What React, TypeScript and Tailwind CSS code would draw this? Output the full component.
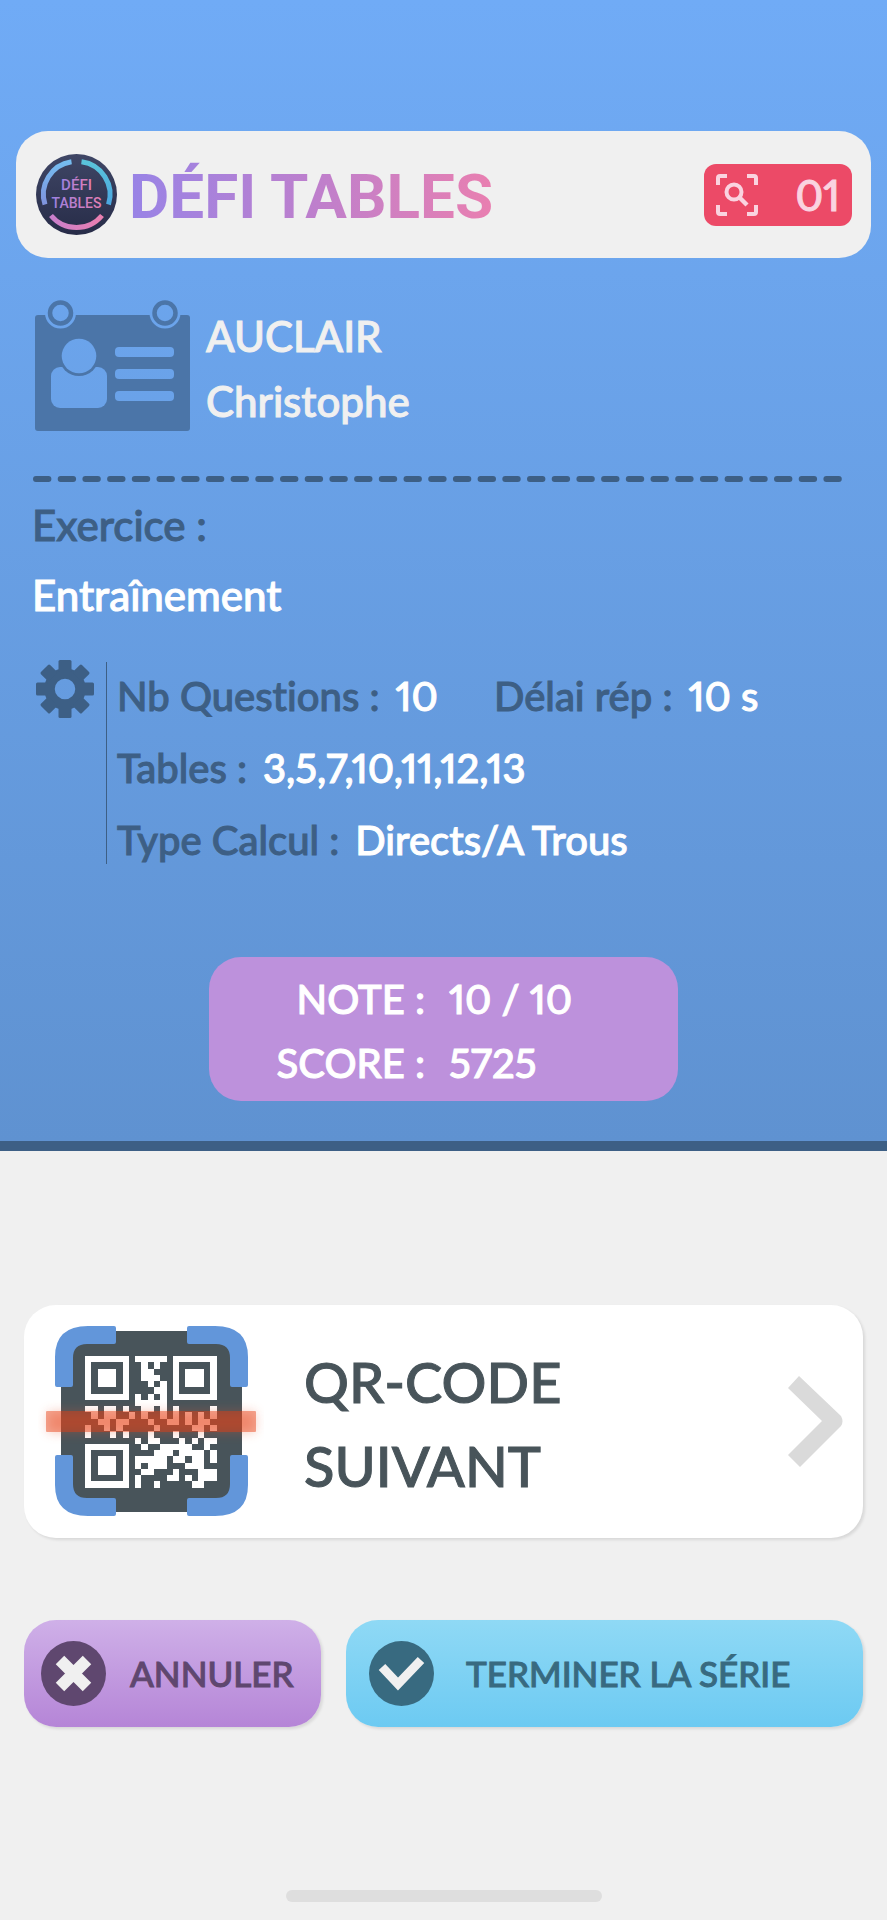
import type { ReactNode } from "react";

const QR_ROWS = [
  "111111101111101111111",
  "100000100101001000001",
  "101110100110001011101",
  "101110100111001011101",
  "101110100010101011101",
  "100000100001101000001",
  "111111101010101111111",
  "000000001111100000000",
  "110110100110101000001",
  "010110010100101010101",
  "001101100010011010110",
  "100101000001000001101",
  "100010100010001000100",
  "000000001011000101011",
  "111111100100111110010",
  "100000100001110111101",
  "101110101111101101101",
  "101110101011100011100",
  "101110100110001000111",
  "100000101000011010111",
  "111111101001000001100",
];

/* -----------------------------
   ICONS
------------------------------*/
function Logo() {
  return (
    <svg viewBox="0 0 81 81" className="w-[81px] h-[81px] shrink-0" role="img" aria-label="Défi Tables">
      <defs>
        <linearGradient id="logoBg" x1="0" y1="0" x2="0" y2="1">
          <stop offset="0" stopColor="#3f4665" />
          <stop offset="1" stopColor="#272c48" />
        </linearGradient>
        <linearGradient id="arcLeft" x1="0" y1="0" x2="0" y2="1">
          <stop offset="0" stopColor="#75bdf0" />
          <stop offset="1" stopColor="#7f92dc" />
        </linearGradient>
        <linearGradient id="arcRight" x1="0" y1="0" x2="0" y2="1">
          <stop offset="0" stopColor="#5ac4da" />
          <stop offset="1" stopColor="#4ba6e0" />
        </linearGradient>
        <linearGradient id="textPink" x1="0" y1="0" x2="1" y2="0">
          <stop offset="0" stopColor="#9b82e2" />
          <stop offset="0.5" stopColor="#c07ecb" />
          <stop offset="1" stopColor="#e57fb2" />
        </linearGradient>
        <linearGradient id="arcPink" x1="0" y1="0" x2="1" y2="0">
          <stop offset="0" stopColor="#c97fcb" />
          <stop offset="1" stopColor="#ea7fb0" />
        </linearGradient>
      </defs>
      <circle cx="40.500" cy="40.500" r="40.500" fill="url(#logoBg)" />
      <g fill="none" strokeWidth="5">
        <path d="M35.500 7.800A33 33 0 0 0 9 50.500" stroke="url(#arcLeft)" />
        <path d="M45.500 7.800A33 33 0 0 1 72.500 50.500" stroke="url(#arcRight)" />
        <path d="M15 61.500A33 33 0 0 0 66 61.500" stroke="url(#arcPink)" />
      </g>
      <g fill="url(#textPink)" fontFamily="Roboto, sans-serif" fontWeight="500" textAnchor="middle" className="[-webkit-text-stroke:0px]">
        <text x="40.500" y="36" fontSize="15">DÉFI</text>
        <text x="40.500" y="54" fontSize="14">TABLES</text>
      </g>
    </svg>
  );
}

function ScanIcon() {
  return (
    <svg viewBox="0 0 42 42" className="w-[42px] h-[42px]" fill="none" stroke="#fad3e0" strokeWidth="4" aria-hidden="true">
      <path d="M2 11V4Q2 2 4 2H11M31 2H38Q40 2 40 4V11M40 31V38Q40 40 38 40H31M11 40H4Q2 40 2 38V31" />
      <circle cx="18" cy="18" r="7.500" />
      <path d="M23 23L31 31" strokeWidth="4.500" />
    </svg>
  );
}

function BadgeCardIcon() {
  return (
    <svg viewBox="0 0 155 131" className="w-[155px] h-[131px] shrink-0" aria-hidden="true">
      <defs>
        <mask id="cardHoles">
          <rect width="155" height="131" fill="#fff" />
          <g fill="#000">
            <circle cx="25.500" cy="13" r="15.500" />
            <circle cx="130" cy="13" r="15.500" />
            <rect x="16" y="67" width="56" height="41" rx="9" />
            <rect x="80" y="47" width="59" height="10" rx="4" />
            <rect x="80" y="69" width="59" height="10" rx="4" />
            <rect x="80" y="91" width="59" height="10" rx="4" />
          </g>
          <circle cx="44" cy="56" r="20" fill="#fff" />
          <circle cx="44" cy="56" r="17.300" fill="#000" />
        </mask>
      </defs>
      <rect y="15" width="155" height="116" rx="3" fill="#4b75a8" mask="url(#cardHoles)" />
      <g fill="none" stroke="#4b75a8" strokeWidth="4.500">
        <circle cx="25.500" cy="13" r="10.500" />
        <circle cx="130" cy="13" r="10.500" />
      </g>
    </svg>
  );
}

function GearIcon() {
  return (
    <svg viewBox="-29 -29 58 58" className="w-[58px] h-[58px] shrink-0" fill="#3d5f85" aria-hidden="true">
      <circle r="15.500" fill="none" stroke="#3d5f85" strokeWidth="10.500" />
      {[0, 45, 90, 135, 180, 225, 270, 315].map((a) => (
        <rect key={a} x="-6.500" y="-29" width="13" height="12" rx="1.500" transform={`rotate(${a})`} />
      ))}
    </svg>
  );
}

function QrIcon() {
  return (
    <svg viewBox="0 0 226 210" className="w-[226px] h-[210px] shrink-0" aria-hidden="true">
      <defs>
        <filter id="glow" x="-20%" y="-80%" width="140%" height="260%">
          <feGaussianBlur stdDeviation="6" />
        </filter>
      </defs>
      <rect x="23" y="14" width="181" height="181" rx="20" fill="#48545a" />
      <g transform="translate(47 39) scale(6.270)" fill="#fff" shapeRendering="crispEdges">
        {QR_ROWS.map((row, y) =>
          row.split("").map((c, x) => (c === "1" ? <rect key={`${x}-${y}`} x={x} y={y} width="1" height="1" /> : null))
        )}
      </g>
      <g fill="#6296da">
        <path d="M17 68V40Q17 9 50 9H76Q78 9 78 11V25Q78 27 76 27H49Q35 27 35 41V68Q35 70 33 70H19Q17 70 17 68Z" />
        <path d="M210 68V40Q210 9 177 9H151Q149 9 149 11V25Q149 27 151 27H178Q192 27 192 41V68Q192 70 194 70H208Q210 70 210 68Z" />
        <path d="M17 140V168Q17 199 50 199H76Q78 199 78 197V183Q78 181 76 181H49Q35 181 35 167V140Q35 138 33 138H19Q17 138 17 140Z" />
        <path d="M210 140V168Q210 199 177 199H151Q149 199 149 197V183Q149 181 151 181H178Q192 181 192 167V140Q192 138 194 138H208Q210 138 210 140Z" />
      </g>
      <rect x="10" y="95" width="207" height="20" fill="#e8552f" opacity="0.350" filter="url(#glow)" />
      <rect x="8" y="94" width="210" height="21" rx="1" fill="#e63c10" opacity="0.450" />
    </svg>
  );
}

function Param({ label, children }: { label: string; children: ReactNode }) {
  return (
    <div className="flex gap-4 whitespace-nowrap">
      <dt className="text-[#3d5f85]">{label}</dt>
      <dd className="text-white">{children}</dd>
    </div>
  );
}

/* -----------------------------
   MAIN SCREEN
------------------------------*/
export default function App() {
  return (
    <main className="min-h-screen flex flex-col bg-[#f0f0f0] font-['Lato',sans-serif] font-medium text-[42px] proportional-nums [font-variant-ligatures:none] [-webkit-text-stroke:1px_currentColor]">
      {/* SUMMARY */}
      <section className="bg-linear-to-b from-[#70abf6] to-[#5f92d1] border-b-10 border-[#3d5f85] pt-[131px] pb-10">
        <header className="mx-4 h-[127px] pl-5 pr-[19px] flex items-center bg-[#f0f0f0] rounded-4xl">
          <Logo />
          <h1 className="ml-3 pt-1 font-['Roboto',sans-serif] font-bold text-[62px] leading-[72px] bg-linear-to-r from-[#9883e6] via-[#bd7fcd] to-[#e97fb0] bg-clip-text text-transparent [-webkit-text-stroke:0px]">
            DÉFI TABLES
          </h1>
          <div className="ml-auto w-[148px] h-[62px] px-3 flex items-center justify-between bg-[#ec4a67] text-[#fad3e0] rounded-xl">
            <ScanIcon />
            <span className="leading-[62px]">01</span>
          </div>
        </header>

        <div className="mt-[42px] ml-[35px] flex gap-4 leading-[65px] text-[#f0f0f0]">
          <BadgeCardIcon />
          <div className="pt-1">
            <p>AUCLAIR</p>
            <p>Christophe</p>
          </div>
        </div>

        <svg className="mt-[42px] ml-[33px] w-[810px] h-[6px]" aria-hidden="true">
          <line x1="3" y1="3" x2="807" y2="3" stroke="#3d5f85" strokeWidth="6" strokeLinecap="round" strokeDasharray="12.400 12.300" />
        </svg>

        <div className="mt-2 ml-8 leading-[70px]">
          <p className="text-[#3d5f85]">Exercice :</p>
          <p className="text-white">Entraînement</p>
        </div>

        <div className="mt-[30px] ml-9 flex text-[40px] leading-[72px]">
          <GearIcon />
          <div className="ml-3 mt-0.5 mb-3 w-px bg-[#3d5f85]" />
          <dl className="ml-2.5 grow">
            <div className="grid grid-cols-[377px_1fr]">
              <Param label="Nb Questions :">10</Param>
              <Param label="Délai rép :">10 s</Param>
            </div>
            <Param label="Tables :">3,5,7,10,11,12,13</Param>
            <Param label="Type Calcul :">Directs/A Trous</Param>
          </dl>
        </div>

        <dl className="mt-[81px] mx-auto w-[469px] pt-2.5 pb-1.5 grid grid-cols-[216px_1fr] gap-x-6 text-[40px] leading-[64px] bg-[#bd91dc] text-white rounded-4xl">
          <dt className="text-right">NOTE :</dt>
          <dd>10 / 10</dd>
          <dt className="text-right">SCORE :</dt>
          <dd>5725</dd>
        </dl>
      </section>

      {/* ACTIONS */}
      <section className="pt-[154px] px-6">
        <button className="w-full h-[233px] pl-3.5 pr-5 flex items-center bg-white rounded-4xl shadow-[2px_2px_3px_rgba(0,0,0,0.1)] text-left text-[56px] leading-[84px] text-[#48545a]">
          <QrIcon />
          <span className="ml-10 pt-1">
            QR-CODE
            <br />
            SUIVANT
          </span>
          <svg viewBox="0 0 55 91" className="ml-auto w-[55px] h-[91px]" fill="#dadada" aria-hidden="true">
            <path d="M11 0L53 40Q56 45.500 53 50L12 91L0 79L34 45L0 12Z" />
          </svg>
        </button>

        <div className="mt-[82px] flex gap-[25px] text-[35px] whitespace-nowrap">
          <button className="w-[297px] h-[107px] pl-[17px] flex items-center gap-6 bg-linear-to-b from-[#cfb0e8] to-[#b585d7] text-[#5f476f] rounded-4xl shadow-[2px_2px_3px_rgba(0,0,0,0.1)]">
            <svg viewBox="0 0 65 65" className="w-[65px] h-[65px] shrink-0" aria-hidden="true">
              <circle cx="32.500" cy="32.500" r="32.500" fill="#5f476f" />
              <path d="M19 19L46 46M46 19L19 46" stroke="#f0f0f0" strokeWidth="12" />
            </svg>
            ANNULER
          </button>
          <button className="grow h-[107px] pl-[23px] flex items-center gap-8 bg-linear-to-b from-[#8fd9f5] to-[#6ccaf2] text-[#386a80] rounded-4xl shadow-[2px_2px_3px_rgba(0,0,0,0.1)]">
            <svg viewBox="0 0 65 65" className="w-[65px] h-[65px] shrink-0" aria-hidden="true">
              <circle cx="32.500" cy="32.500" r="32.500" fill="#386a80" />
              <path d="M13 26L29 43L52 19" fill="none" stroke="#f0f0f0" strokeWidth="9" />
            </svg>
            TERMINER LA SÉRIE
          </button>
        </div>
      </section>

      {/* HOME INDICATOR */}
      <div className="mt-auto mb-[18px] mx-auto w-[316px] h-3 rounded-full bg-[#dedede]" />
    </main>
  );
}
